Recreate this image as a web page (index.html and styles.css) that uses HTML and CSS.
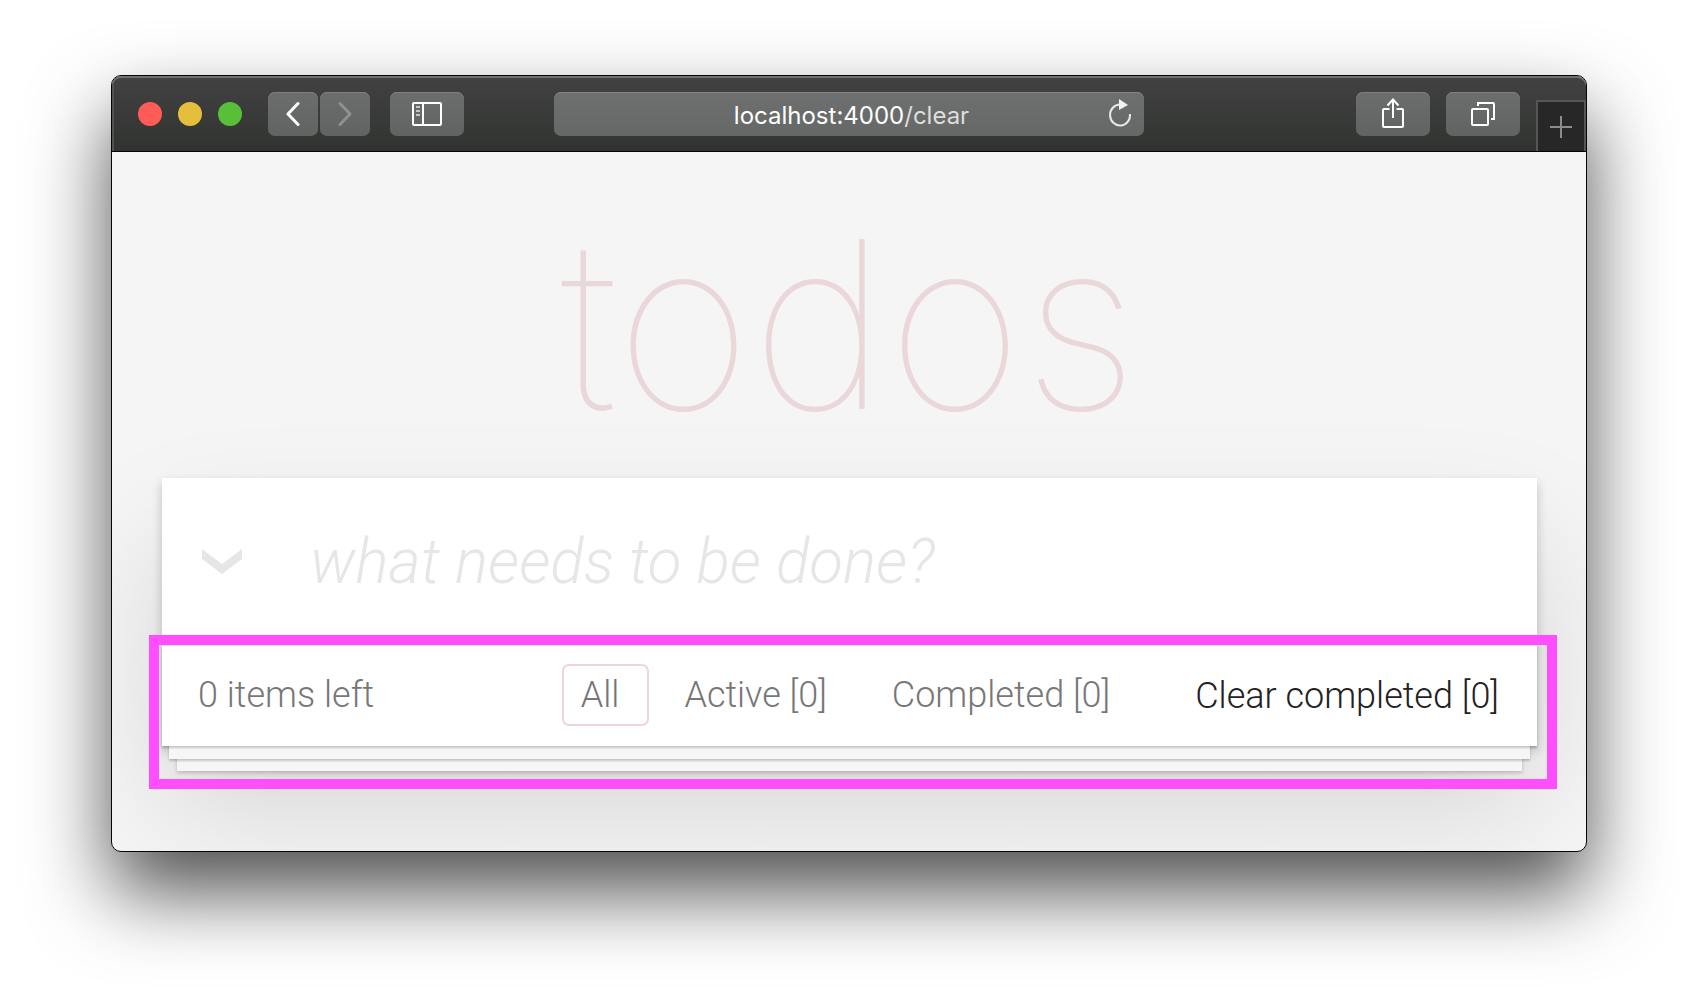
FILE: index.html
```
<!DOCTYPE html>
<html lang="en">
<head>
<meta charset="utf-8">
<title>todos</title>
<link rel="stylesheet" href="styles.css">
</head>
<body>
<div class="window">
  <header class="toolbar">
    <div class="tools">
      <div class="lights">
        <button class="light close" aria-label="Close"></button>
        <button class="light minimize" aria-label="Minimize"></button>
        <button class="light expand" aria-label="Zoom"></button>
      </div>
      <div class="history">
        <button class="tool narrow" aria-label="Back">
          <svg width="14" height="26" viewBox="0 0 14 26" fill="none" stroke="#fff" stroke-width="3" stroke-linecap="round" stroke-linejoin="round"><path d="M12 2.500 2 13 12 23.500"/></svg>
        </button>
        <button class="tool narrow" aria-label="Forward" disabled>
          <svg width="14" height="26" viewBox="0 0 14 26" fill="none" stroke="#8f908f" stroke-width="3" stroke-linecap="round" stroke-linejoin="round"><path d="M2 2.500 12 13 2 23.500"/></svg>
        </button>
      </div>
      <button class="tool" aria-label="Show sidebar">
        <svg width="30" height="24" viewBox="0 0 30 24" fill="none" stroke="#fff" stroke-width="2"><rect x="1" y="1" width="28" height="22" rx="1"/><path d="M11 1v22"/><path stroke="#c4c5c4" d="M4 5h4M4 9h4M4 13h4"/></svg>
      </button>
    </div>
    <div class="address">
      <button class="url"><span class="host">localhost:4000</span>/clear</button>
      <button class="reload" aria-label="Reload">
        <svg width="24" height="28" viewBox="0 0 24 28"><path d="M22 15A10 10.500 0 1 1 12 5.500" fill="none" stroke="#e8e8e8" stroke-width="2"/><path d="M11 0 20 6 11 11Z" fill="#f2f2f2"/></svg>
      </button>
    </div>
    <div class="tools end">
      <button class="tool" aria-label="Share">
        <svg width="22" height="32" viewBox="0 0 22 32" fill="none" stroke="#fff" stroke-width="2"><path d="M7.500 11H2a1 1 0 0 0-1 1v16a1 1 0 0 0 1 1h18a1 1 0 0 0 1-1V12a1 1 0 0 0-1-1h-5.500"/><path d="M11 20V2M5.500 7.500 11 1.500 16.500 7.500"/></svg>
      </button>
      <button class="tool" aria-label="Show all tabs">
        <svg width="24" height="24" viewBox="0 0 24 24" fill="none" stroke="#fff" stroke-width="2"><rect x="1" y="7" width="16" height="16" rx="1"/><path d="M7 4V1h15a1 1 0 0 1 1 1v15h-3"/></svg>
      </button>
      <button class="new-tab" aria-label="New tab">
        <svg width="22" height="22" viewBox="0 0 22 22" stroke="#8b8c8b" stroke-width="2"><path d="M0 11h22M11 0v22"/></svg>
      </button>
    </div>
  </header>
  <main class="page">
    <h1 class="title">todos</h1>
    <section class="app">
      <div class="entry">
        <button class="toggle" aria-label="Mark all as complete">
          <svg width="40" height="26" viewBox="0 0 40 26" fill="#e6e6e6"><path d="M0 0 20 15 40 0V10L20 25 0 10Z"/></svg>
        </button>
        <input class="new-todo" type="text" aria-label="New todo" placeholder="what needs to be done?">
      </div>
      <footer class="footer">
        <span class="count">0 items left</span>
        <nav class="filters">
          <a class="filter selected" href="#all">All</a>
          <a class="filter" href="#active">Active [0]</a>
          <a class="filter" href="#completed">Completed [0]</a>
        </nav>
        <button class="clear">Clear completed [0]</button>
        <div class="highlight"></div>
      </footer>
    </section>
  </main>
</div>
</body>
</html>
```
FILE: styles.css
```
* {
  box-sizing: border-box;
}

body {
  min-height: 100vh;
  margin: 0;
  padding: 75px 111px 147px;
  background: #fff;
  font-family: Roboto, "Liberation Sans", sans-serif;
}

button {
  margin: 0;
  padding: 0;
  border: 0;
  background: none;
  font: inherit;
  color: inherit;
}

svg {
  display: block;
}

.window {
  border: 1px solid #050505;
  border-radius: 10px;
  background: #f5f5f5;
  box-shadow: 0 40px 80px rgba(0, 0, 0, .69);
}

/* Browser toolbar */

.toolbar {
  display: grid;
  grid-template-columns: 1fr minmax(0, 590px) 1fr;
  align-items: start;
  height: 76px;
  padding-top: 16px;
  border-bottom: 1px solid #050505;
  border-radius: 9px 9px 0 0;
  background: linear-gradient(#414241, #313331);
  box-shadow: inset 0 2px #6f706f, inset 2px 0 #505150;
}

.tools {
  display: flex;
  align-items: center;
  gap: 20px;
  padding-left: 26px;
}

.lights {
  display: flex;
  gap: 16px;
  margin-right: 6px;
}

.light {
  width: 24px;
  height: 24px;
  border-radius: 50%;
}

.close {
  background: #ff5c57;
}

.minimize {
  background: #e5bf3c;
}

.expand {
  background: #58c038;
}

.history {
  display: flex;
  gap: 2px;
}

.tool {
  display: grid;
  place-items: center;
  width: 74px;
  height: 44px;
  border-radius: 7px;
  background: linear-gradient(#6c6e6d, #616362);
  box-shadow: inset 0 1px #7e807f;
}

.narrow {
  width: 50px;
}

.address {
  display: grid;
  grid-template-columns: 41px 1fr 36px;
  align-items: center;
  height: 44px;
  border-radius: 7px;
  background: linear-gradient(#6e706f, #666867);
  box-shadow: inset 0 1px #838584;
}

.url {
  grid-column: 2;
  padding-top: 4px;
  font: 400 24px/40px Inter, "Liberation Sans", sans-serif;
  color: #dededd;
}

.host {
  color: #fff;
}

.reload {
  justify-self: start;
  padding-bottom: 2px;
}

.end {
  justify-content: flex-end;
  align-items: flex-start;
  gap: 16px;
  padding-left: 0;
}

.new-tab {
  display: grid;
  place-items: center;
  width: 50px;
  height: 51px;
  margin-top: 8px;
  border: solid #555655;
  border-width: 2px 2px 0;
  background: #262726;
}

/* Page */

.page {
  overflow: hidden;
  padding: 55px 49px 105px 50px;
  border-radius: 0 0 9px 9px;
}

.title {
  margin: 0 0 38px;
  font: 100 234px/233px Inter, "Liberation Sans", sans-serif;
  text-align: center;
  color: #ead7d9;
}

.app {
  background: #fff;
  box-shadow: 0 5px 10px rgba(0, 0, 0, .2), 0 62px 125px rgba(0, 0, 0, .13);
}

.entry {
  display: flex;
  align-items: center;
  gap: 68px;
  height: 167px;
  padding: 0 40px;
}

.new-todo {
  flex: 1;
  min-width: 0;
  padding: 0;
  border: 0;
  outline: 0;
  background: none;
  font: italic 300 62px/80px Roboto, "Liberation Sans", sans-serif;
}

.new-todo::placeholder {
  color: #e6e6e6;
  opacity: 1;
}

.footer {
  position: relative;
  display: flex;
  align-items: center;
  padding: 18px 38px 20px 36px;
  border-top: 1px solid #e6e6e6;
  font-size: 36px;
  line-height: 58px;
  font-weight: 300;
  color: #777;
  white-space: nowrap;
  background: #fff;
  box-shadow:
    0 2px 2px rgba(0, 0, 0, .2),
    0 20px 0 -7px #f6f6f6,
    0 22px 2px -7px rgba(0, 0, 0, .2),
    0 40px 0 -15px #f6f6f6,
    0 42px 4px -15px rgba(0, 0, 0, .2);
}

.filters {
  display: flex;
  gap: 16px;
  margin: 0 55px 0 auto;
}

.filter {
  padding: 0 28px 0 17px;
  border: 2px solid transparent;
  border-radius: 7px;
  color: inherit;
  text-decoration: none;
}

.selected {
  border-color: #efd5d7;
}

.clear {
  padding-top: 2px;
  color: #222;
}

/* Frame drawn over the footer area */

.highlight {
  position: absolute;
  top: -11px;
  right: -20px;
  bottom: -43px;
  left: -13px;
  border: 10px solid #ff4dff;
  pointer-events: none;
}
```
